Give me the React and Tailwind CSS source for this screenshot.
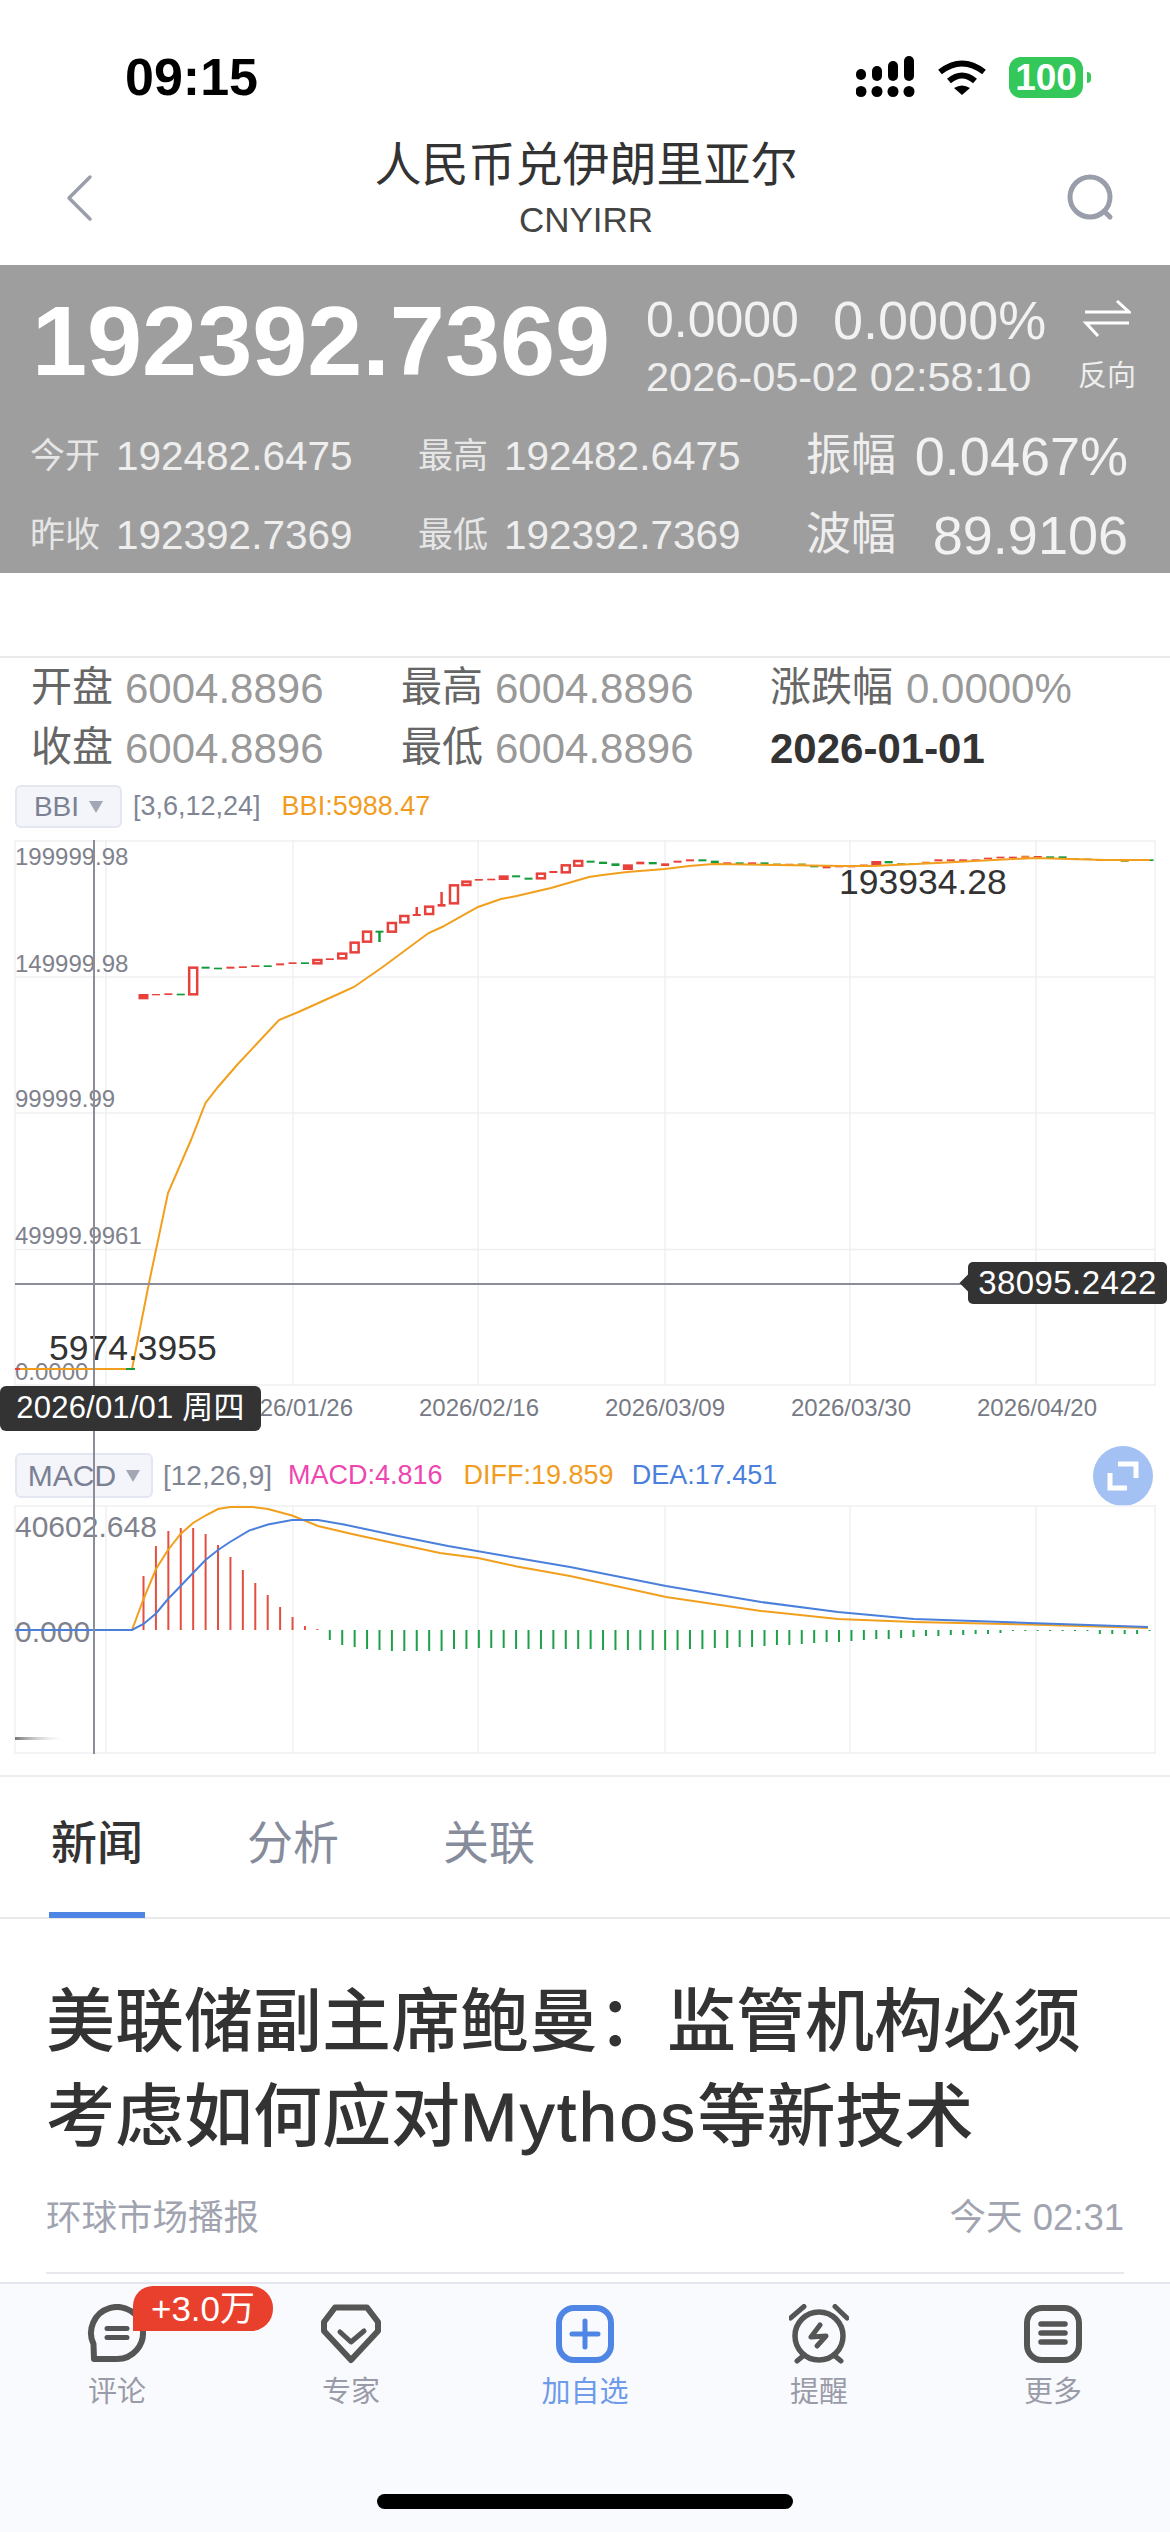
import React from 'react';

const RED = '#e8403a';
const GREEN = '#159a3c';
const ORANGE = '#f19f1c';
const BLUE = '#4a80dc';
const GRID = '#eff0f3';
const BAR_STEP = 12.42;
const barX = (i) => 143.5 + BAR_STEP * i;

const gridX = [15, 106, 293, 478, 665, 850, 1036, 1155];

// candle bodies: [top, bottom, kind], r = filled red, g = filled green, h = hollow red, o = olive, a = orange
const candlesLeft = [
  [1062, 1078, 'r'], [1062, 1066, 'r'], [1060, 1065, 'r'], [1061, 1066, 'g'], [980, 1066, 'h'],
  [980, 986, 'g'], [983, 988, 'g'], [980, 986, 'r'], [979, 984, 'r'], [976, 981, 'r'],
  [976, 981, 'g'], [970, 976, 'r'], [967, 972, 'r'], [967, 972, 'g'], [957, 973, 'h'],
  [955, 960, 'r'], [938, 958, 'h'], [905, 940, 'h'], [872, 908, 'h'], [872, 878, 'g'],
  [846, 878, 'h'], [825, 850, 'h'], [822, 828, 'r'], [797, 825, 'h'], [792, 800, 'r'],
  [733, 793, 'h'], [722, 738, 'h'], [717, 722, 'r'], [716, 721, 'r'], [706, 720, 'r'],
  [706, 712, 'g'], [713, 719, 'g'], [698, 718, 'h'], [693, 699, 'r'], [673, 700, 'h'],
].map(([a, b, k]) => [640 + a / 3, 640 + b / 3, k]);

const candlesRight = [
  [240, 260, 'h'], [242, 248, 'g'], [245, 252, 'g'], [250, 258, 'g'], [253, 270, 'r'], [245, 253, 'r'],
  [246, 253, 'g'], [250, 258, 'r'], [242, 248, 'r'], [238, 244, 'r'], [238, 244, 'g'], [242, 250, 'g'],
  [247, 253, 'r'], [247, 253, 'g'], [247, 252, 'r'], [247, 252, 'g'], [250, 258, 'o'], [251, 257, 'a'],
  [250, 256, 'o'], [256, 262, 'g'], [258, 265, 'r'], [257, 262, 'r'], [257, 262, 'r'], [253, 258, 'a'],
  [243, 258, 'r'], [243, 250, 'g'], [249, 254, 'o'], [249, 254, 'o'], [245, 251, 'a'], [238, 244, 'r'],
  [238, 244, 'r'], [238, 244, 'r'], [238, 243, 'r'], [233, 238, 'r'], [230, 235, 'r'], [230, 235, 'r'],
  [227, 235, 'a'], [228, 233, 'r'], [229, 234, 'g'], [229, 234, 'g'], [234, 239, 'o'], [235, 240, 'o'],
  [237, 243, 'a'], [237, 243, 'o'], [240, 246, 'o'], [238, 243, 'a'], [238, 243, 'g'],
].map(([a, b, k]) => [780 + a / 3, 780 + b / 3, k]);

const candleFill = { r: RED, g: GREEN, o: '#a9a53a', a: '#f0803a' };

// thin wicks: [bar index, top, bottom, colour]
const wicks = [
  [19, 931, 942, GREEN],
  [22, 907, 916, RED],
  [24, 892, 906, RED],
];

const bbiLine = [
  [15, 1369], [132, 1369], [149, 1283], [168, 1193], [191, 1140], [205.5, 1103], [218, 1087], [237, 1065],
  [279, 1020], [298.5, 1012], [340.6, 993], [354, 987], [382.7, 967], [428.6, 933], [442, 927], [478, 907],
  [501, 899], [516.6, 896], [551, 888], [589, 877], [602.5, 875], [627, 872], [665, 869], [689, 866],
  [713.5, 864], [775.5, 865], [843, 866], [873, 866], [937, 863], [993.5, 860], [1035, 858], [1069, 859],
  [1106, 860], [1150, 860],
];

const diffLine = [
  [132, 1630], [143.5, 1599], [156, 1569], [168, 1550], [180.6, 1534], [193, 1523], [205.5, 1515.5],
  [218, 1509], [230, 1507], [252.6, 1507], [268, 1509], [292, 1515.5], [318, 1526], [352, 1534], [398, 1544],
  [440, 1553], [478, 1558], [517, 1566.5], [570, 1576], [666, 1597], [761, 1611], [838, 1619], [914, 1622],
  [1029, 1624.5], [1148, 1628],
];

const deaLine = [
  [15, 1630], [132, 1630], [143.5, 1624], [156, 1613.5], [168, 1599], [180.6, 1586], [193, 1573], [205.5, 1560],
  [218, 1550], [230, 1542], [249, 1530.6], [268, 1524.5], [292, 1520], [318, 1520], [344, 1524.5], [398, 1536],
  [448, 1546], [517, 1558], [570, 1567], [666, 1586], [761, 1602], [838, 1612], [914, 1619], [1029, 1623],
  [1148, 1627],
];

const redBars = [54, 84, 99, 102, 102, 96, 85, 73, 60, 47, 35, 23, 13, 4, 1];
const greenBars = [
  10, 15, 17, 19, 20, 21, 21, 21, 21, 21, 19, 19, 18, 18, 18, 19, 19, 19, 19, 19, 19, 19, 20, 20, 20, 20, 20, 20, 20,
  19, 19, 18, 18, 17, 17, 16, 15, 15, 14, 13, 12, 12, 11, 10, 9, 9, 8, 7, 6, 6, 5, 5, 4, 4, 3,
  1, 1, 1, 1, 1, 1, 1, 4, 4, 4, 4, 1,
];

const toPoints = (list) => list.map((p) => p.join(',')).join(' ');

function PriceChart() {
  const candles = [...candlesLeft, ...candlesRight];
  const labels = [
    ['199999.98', 856],
    ['149999.98', 963],
    ['99999.99', 1098],
    ['49999.9961', 1235],
    ['0.0000', 1371],
  ];
  return (
    <svg width="1170" height="546" viewBox="0 840 1170 546" className="block">
      {gridX.map((x) => (
        <line key={x} x1={x} x2={x} y1="840" y2="1386" stroke={GRID} strokeWidth="1.5" />
      ))}
      {[841, 977, 1113, 1249.5, 1385].map((y) => (
        <line key={y} x1="15" x2="1155" y1={y} y2={y} stroke={GRID} strokeWidth="1.5" />
      ))}
      {labels.map(([text, y]) => (
        <text key={text} x="15" y={y} fontSize="24" fill="#7f828d" dominantBaseline="central">
          {text}
        </text>
      ))}
      {wicks.map(([i, top, bottom, color]) => (
        <line key={i} x1={barX(i)} x2={barX(i)} y1={top} y2={bottom} stroke={color} strokeWidth="2.5" />
      ))}
      {candles.map(([top, bottom, kind], i) =>
        kind === 'h' ? (
          <rect key={i} x={barX(i) - 4} y={top + 1} width="8" height={bottom - top - 2} fill="none" stroke={RED} strokeWidth="2.5" />
        ) : (
          <rect key={i} x={barX(i) - (bottom - top > 4 ? 5 : 4)} y={top} width={bottom - top > 4 ? 10 : 8} height={bottom - top} fill={candleFill[kind]} />
        )
      )}
      <polyline points={toPoints(bbiLine)} fill="none" stroke={ORANGE} strokeWidth="2" />
      <line x1="15" x2="20" y1="1369" y2="1369" stroke={RED} strokeWidth="2" />
      <line x1="126" x2="135" y1="1369" y2="1369" stroke={GREEN} strokeWidth="2" />
      <text x="49" y="1348" fontSize="35.5" fill="#333" dominantBaseline="central">5974.3955</text>
      <text x="839" y="882" fontSize="35.5" fill="#333" dominantBaseline="central">193934.28</text>
    </svg>
  );
}

function MacdChart() {
  return (
    <svg width="1170" height="249" viewBox="0 1505 1170 249" className="block">
      <defs>
        <linearGradient id="fade" x1="0" x2="1" y1="0" y2="0">
          <stop offset="0" stopColor="#777" />
          <stop offset="1" stopColor="#eee" stopOpacity="0" />
        </linearGradient>
      </defs>
      {gridX.map((x) => (
        <line key={x} x1={x} x2={x} y1="1505" y2="1754" stroke={GRID} strokeWidth="1.5" />
      ))}
      {[1506, 1753].map((y) => (
        <line key={y} x1="15" x2="1155" y1={y} y2={y} stroke={GRID} strokeWidth="1.5" />
      ))}
      <text x="15" y="1526" fontSize="30" fill="#7f828d" dominantBaseline="central">40602.648</text>
      <text x="15" y="1631" fontSize="30" fill="#7f828d" dominantBaseline="central">0.000</text>
      <rect x="15" y="1737" width="50" height="3" fill="url(#fade)" />
      {redBars.map((h, i) => (
        <rect key={i} x={barX(i) - 1} y={1630 - h} width="2" height={h} fill="#e2503f" />
      ))}
      {greenBars.map((h, i) => (
        <rect key={i} x={barX(i + 15) - 1} y="1630" width="2" height={h} fill="#1ea04a" />
      ))}
      <polyline points={toPoints(diffLine)} fill="none" stroke={ORANGE} strokeWidth="2" />
      <polyline points={toPoints(deaLine)} fill="none" stroke={BLUE} strokeWidth="2" />
    </svg>
  );
}

function StatusBar() {
  return (
    <div className="flex h-[134px] items-center justify-between pt-[20px] pl-[125px] pr-[79px]">
      <span className="text-[52px] leading-none font-semibold text-black">09:15</span>
      <div className="flex items-center">
        <svg width="60" height="42" viewBox="856 57 60 42">
          {[[856, 70, 11], [872, 67, 15], [888, 62, 20], [904, 57, 25]].map(([x, y, h]) => (
            <g key={x} fill="#000">
              <rect x={x} y={y} width="10" height={h} rx="5" />
              <circle cx={x + 5} cy="92.5" r="5.5" />
            </g>
          ))}
        </svg>
        <svg width="50" height="36" viewBox="0 0 50 36" className="ml-[21px]" fill="none" stroke="#000" strokeWidth="6">
          <path d="M3 13Q25 -4 47 13" />
          <path d="M12 22Q25 11 38 22" />
          <path d="M17 29Q25 24 33 29L25 36Z" fill="#000" stroke="none" />
        </svg>
        <div className="ml-[22px] flex h-[41px] w-[74px] items-center justify-center rounded-[12px] bg-[#34c759] text-[37px] leading-none font-bold text-white">
          100
        </div>
        <div className="ml-[4px] h-[11px] w-[4px] rounded-r-full bg-[#34c759]" />
      </div>
    </div>
  );
}

function Header() {
  return (
    <div className="flex h-[131px] items-start justify-between pr-[55px] pl-[65px]">
      <svg width="28" height="48" viewBox="0 0 28 48" className="mt-[40px] mr-[12px]" fill="none" stroke="#9a9eab" strokeWidth="3.5" strokeLinecap="round" strokeLinejoin="round">
        <path d="M25 3L4 24L25 45" />
      </svg>
      <div className="mt-[1px] flex flex-col items-center">
        <span className="text-[47px] leading-[60px] text-[#333]">人民币兑伊朗里亚尔</span>
        <span className="text-[35px] leading-[50px] text-[#444]">CNYIRR</span>
      </div>
      <svg width="48" height="48" viewBox="0 0 48 48" className="mt-[40px]" fill="none" stroke="#9a9eab" strokeWidth="5" strokeLinecap="round">
        <circle cx="23" cy="23" r="20" />
        <path d="M38 38L43 43" />
      </svg>
    </div>
  );
}

function QuoteCell({ label, value, className }) {
  return (
    <div className={`flex items-center ${className}`}>
      <span className="w-[86px] text-[35px] text-[#e6e6e6]">{label}</span>
      <span className="text-[40.5px] text-[#eeeeee]">{value}</span>
    </div>
  );
}

function QuoteRange({ label, value }) {
  return (
    <div className="flex w-[322px] items-center">
      <span className="text-[45px] text-[#eeeeee]">{label}</span>
      <span className="flex-1 text-right text-[54px] font-normal text-[#f2f2f2]">{value}</span>
    </div>
  );
}

function QuotePanel() {
  return (
    <div className="h-[308px] bg-[#9e9e9e]">
      <div className="flex h-[152px] pl-[32px]">
        <div className="w-[614px] pt-[25px] text-[99px] leading-[102px] font-bold text-white">192392.7369</div>
        <div className="w-[430px] pt-[28px]">
          <div className="flex h-[54px] items-center text-[50px] text-[#f2f2f2]">
            <span className="w-[187px]">0.0000</span>
            <span className="text-[54px]">0.0000%</span>
          </div>
          <div className="mt-[3px] text-[41.5px] leading-[54px] text-[#eeeeee]">2026-05-02 02:58:10</div>
        </div>
        <div className="flex w-[62px] flex-col items-center pt-[35px]">
          <svg width="48" height="38" viewBox="1083 302 48 38" fill="none" stroke="#fff" strokeWidth="3">
            <path d="M1085 314H1129L1117 303" />
            <path d="M1129 325H1086L1098 338" />
          </svg>
          <span className="mt-[21px] text-[29px] leading-[34px] text-[#eeeeee]">反向</span>
        </div>
      </div>
      <div className="flex h-[78px] pl-[30px]">
        <QuoteCell label="今开" value="192482.6475" className="w-[388px]" />
        <QuoteCell label="最高" value="192482.6475" className="w-[388px]" />
        <QuoteRange label="振幅" value="0.0467%" />
      </div>
      <div className="flex h-[78px] pl-[30px] pt-[2px]">
        <QuoteCell label="昨收" value="192392.7369" className="w-[388px]" />
        <QuoteCell label="最低" value="192392.7369" className="w-[388px]" />
        <QuoteRange label="波幅" value="89.9106" />
      </div>
    </div>
  );
}

function OhlcCell({ label, value, className, labelWidth = 'w-[94px]' }) {
  return (
    <div className={`flex items-center ${className}`}>
      <span className={`${labelWidth} text-[41px] text-[#666]`}>{label}</span>
      <span className="text-[42px] text-[#999]">{value}</span>
    </div>
  );
}

function OhlcStats() {
  return (
    <div className="mt-[83px] border-t-2 border-[#ebebeb] pl-[31px] pb-[7px]">
      <div className="flex h-[60px]">
        <OhlcCell label="开盘" value="6004.8896" className="w-[370px]" />
        <OhlcCell label="最高" value="6004.8896" className="w-[369px]" />
        <OhlcCell label="涨跌幅" value="0.0000%" labelWidth="w-[136px]" />
      </div>
      <div className="flex h-[60px]">
        <OhlcCell label="收盘" value="6004.8896" className="w-[370px]" />
        <OhlcCell label="最低" value="6004.8896" className="w-[369px]" />
        <span className="self-center text-[42px] font-semibold text-[#333]">2026-01-01</span>
      </div>
    </div>
  );
}

function IndicatorButton({ name, className }) {
  return (
    <div className={`flex items-center justify-center gap-[10px] rounded-[6px] border-2 border-[#e4e7f1] bg-[#f3f5fb] text-[#7b8093] ${className}`}>
      <span>{name}</span>
      <span className="h-0 w-0 border-x-[7px] border-t-[12px] border-x-transparent border-t-[#a3a7b5]" />
    </div>
  );
}

function NavIcon({ children, color = '#555' }) {
  return (
    <svg width="60" height="60" viewBox="0 0 60 60" fill="none" stroke={color} strokeWidth="6" strokeLinecap="round" strokeLinejoin="round">
      {children}
    </svg>
  );
}

function NavItem({ icon, label, labelClass = 'text-[#999ca8]', children }) {
  return (
    <div className="flex flex-col items-center">
      <div className="relative h-[60px] w-[60px]">
        {icon}
        {children}
      </div>
      <span className={`mt-[10px] text-[29px] leading-[36px] ${labelClass}`}>{label}</span>
    </div>
  );
}

function BottomNav() {
  return (
    <div className="mt-[8px] h-[250px] border-t-2 border-[#e6e6ee] bg-[#f9fafd] pt-[20px]">
      <div className="grid grid-cols-5">
        <NavItem
          label="评论"
          icon={
            <NavIcon>
              <path d="M7 55H30A26 26 0 1 0 6.5 40.1Z" />
              <path d="M20 24.5H40M20 33.5H40" strokeWidth="5" />
            </NavIcon>
          }
        >
          <span className="absolute top-[-18px] left-[46px] flex h-[45px] w-[140px] items-center justify-center rounded-tl-[20px] rounded-tr-[22px] rounded-br-[22px] rounded-bl-none bg-[#e8402c] text-[35px] leading-none text-white">
            +3.0万
          </span>
        </NavItem>
        <NavItem
          label="专家"
          icon={
            <NavIcon>
              <path d="M14 3.5H46L57 18V27L30 56L3 27V18Z" />
              <path d="M19 28L30 38L43 27" strokeWidth="5" />
            </NavIcon>
          }
        />
        <NavItem
          label="加自选"
          labelClass="text-[#6e9bea]"
          icon={
            <NavIcon color="#4f86e5">
              <rect x="4" y="4" width="52" height="52" rx="15" />
              <path d="M17 30H43M30 17V43" strokeWidth="5" />
            </NavIcon>
          }
        />
        <NavItem
          label="提醒"
          icon={
            <NavIcon>
              <circle cx="30" cy="32" r="24" strokeWidth="5.5" />
              <path d="M1.5 14L15 2.5M46 2.5L58 14M8 57L14 52M46 52L52 57" strokeWidth="5" />
              <path d="M31 21L22 33L37 32L28 42" strokeWidth="5" />
            </NavIcon>
          }
        />
        <NavItem
          label="更多"
          icon={
            <NavIcon>
              <rect x="4" y="4" width="52" height="52" rx="15" />
              <path d="M18 20H42M18 29H42M18 38H42" strokeWidth="5.5" />
            </NavIcon>
          }
        />
      </div>
      <div className="mx-auto mt-[84px] h-[15px] w-[416px] rounded-full bg-black" />
    </div>
  );
}

export default function App() {
  const tabs = ['新闻', '分析', '关联'];
  return (
    <div className="flex h-[2532px] w-[1170px] flex-col overflow-hidden bg-white [font-family:'Liberation_Sans','Noto_Sans_CJK_SC',sans-serif]">
      <StatusBar />
      <Header />
      <QuotePanel />
      <OhlcStats />

      <div className="flex h-[43px] items-center pl-[15px] text-[27px]">
        <IndicatorButton name="BBI" className="h-[43px] w-[107px] text-[28px]" />
        <span className="ml-[11px] text-[#808594]">[3,6,12,24]</span>
        <span className="ml-[21px] text-[#f29c1f]">BBI:5988.47</span>
      </div>

      <div className="relative mt-[12px]">
        <PriceChart />

        <div className="flex h-[44px] items-center pl-[200px] text-[24px] text-[#777a85]">
          {['2026/01/26', '2026/02/16', '2026/03/09', '2026/03/30', '2026/04/20'].map((d) => (
            <span key={d} className="w-[186px] text-center">{d}</span>
          ))}
        </div>

        <div className="mt-[23px] flex h-[45px] items-center pl-[15px] text-[27px]">
          <IndicatorButton name="MACD" className="h-[45px] w-[138px] text-[30px]" />
          <span className="ml-[10px] text-[28px] text-[#808594]">[12,26,9]</span>
          <span className="ml-[16px] text-[#ee45b0]">MACD:4.816</span>
          <span className="ml-[21px] text-[#f29c1f]">DIFF:19.859</span>
          <span className="ml-[18px] text-[#4a7fdc]">DEA:17.451</span>
          <div className="mr-[17px] ml-auto flex h-[60px] w-[60px] items-center justify-center rounded-full bg-[#a3c1f3]">
            <svg width="32" height="30" viewBox="0 0 32 30" fill="none" stroke="#fff" strokeWidth="5">
              <path d="M11 3H29V17" />
              <path d="M3 12V27H20" />
            </svg>
          </div>
        </div>

        <div className="mt-[7px]">
          <MacdChart />
        </div>

        {/* crosshair and its tags */}
        <div className="absolute top-0 left-[93px] h-[914px] w-[2px] bg-[#8b8e99]" />
        <div className="absolute top-[443px] left-[15px] h-[2px] w-[950px] bg-[#8b8e99]" />
        <div className="absolute top-[422px] left-[968px] flex h-[42px] w-[199px] items-center justify-center rounded-[5px] bg-[#333] text-[33px] tracking-[0.4px] text-white">
          <span className="absolute top-[15px] left-[-6px] h-[12px] w-[12px] rotate-45 bg-[#333]" />
          <span className="relative">38095.2422</span>
        </div>
        <div className="absolute top-[546px] left-0 flex h-[45px] w-[261px] items-center justify-center rounded-[6px] bg-[#333] text-[31px] tracking-[0.2px] text-white">
          2026/01/01 周四
        </div>
      </div>

      <div className="mt-[21px] flex h-[144px] gap-[100px] border-t-2 border-b-2 border-t-[#ececef] border-b-[#e9e9ec] pl-[49px]">
        {tabs.map((t, i) => (
          <div
            key={t}
            className={`h-[141px] w-[96px] pt-[37px] text-center text-[46px] leading-[58px] ${
              i === 0 ? 'border-b-[6px] border-[#4f86e5] font-medium text-[#333]' : 'text-[#878c9c]'
            }`}
          >
            {t}
          </div>
        ))}
      </div>

      <div className="px-[46px] pt-[56px] text-[69px] leading-[95px] font-medium text-[#333]">
        美联储副主席鲍曼：监管机构必须考虑如何应对<span className="tracking-[2.5px] [-webkit-text-stroke:1px_#333]">Mythos</span>等新技术
      </div>

      <div className="mx-[46px] mt-[28px] flex h-[81px] justify-between border-b-2 border-[#e8e8ec] text-[35.5px] leading-[50px] text-[#a1a4b0]">
        <span>环球市场播报</span>
        <span className="text-[36.5px]">今天 02:31</span>
      </div>

      <BottomNav />
    </div>
  );
}
